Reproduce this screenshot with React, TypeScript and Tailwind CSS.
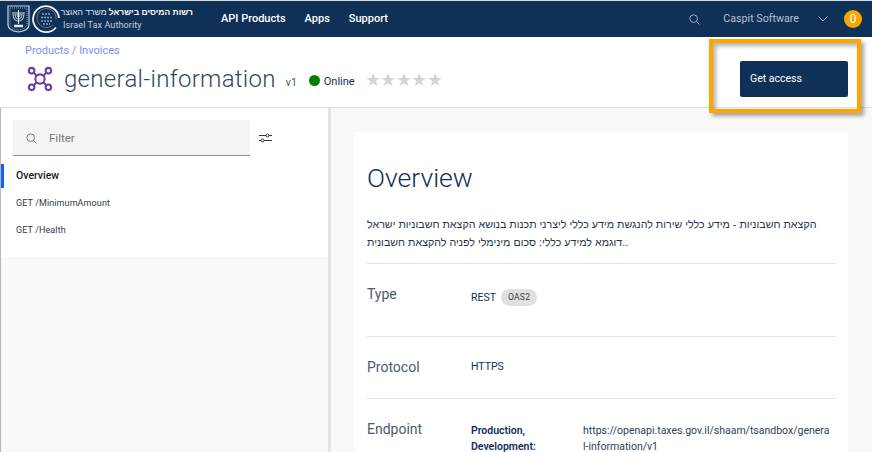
const font = { fontFamily: 'Roboto, "Liberation Sans", sans-serif' };

function Emblem() {
  return (
    <svg width="56" height="32" viewBox="0 0 56 32" fill="none" className="shrink-0">
      <path d="M1 3h21v19c0 4-4 6-10.500 7C5 28 1 26 1 22z" stroke="#c9d2dd" strokeWidth="1.200" />
      <path d="M3 5h17v16c0 3-3 5-8.500 6C6 26 3 24 3 21z" stroke="#8fa1b5" strokeWidth="1" strokeDasharray="1 1" />
      <path d="M11.500 7v14M6 9c0 7 2 9 5.500 9s5.500-2 5.500-9M8 9c0 5 1 7 3.500 7s3.500-2 3.500-7M10 9c0 3 0 5 1.500 5s1.500-2 1.500-5" stroke="#e4e9ef" strokeWidth="1" />
      <path d="M7 23h9" stroke="#e4e9ef" strokeWidth="2.500" />
      <path d="M49 24.500A13 13 0 1 1 52 15" stroke="#f0f3f6" strokeWidth="1.800" />
      <path d="M46 22a9.500 9.500 0 1 1 3-6" stroke="#5f7690" strokeWidth="1" />
      <path d="M35 11h9M34 14.500h11M34 18h11M36 21h7" stroke="#8fa1b5" strokeWidth="1.400" strokeDasharray="2 1" />
    </svg>
  );
}

function ApiIcon() {
  return (
    <svg width="26" height="26" viewBox="0 0 28 28" fill="none" stroke="#6b3fa0" strokeWidth="2.200" className="ml-[2px] shrink-0">
      <circle cx="5" cy="5" r="3" />
      <circle cx="23" cy="5" r="3" />
      <circle cx="5" cy="23" r="3" />
      <circle cx="23" cy="23" r="3" />
      <circle cx="14" cy="14" r="5" />
      <path d="M7.200 7.200 10.500 10.500M20.800 7.200 17.500 10.500M7.200 20.800 10.500 17.500M20.800 20.800 17.500 17.500" />
    </svg>
  );
}

function SearchIcon({ className }: { className: string }) {
  return (
    <svg width="11" height="11" viewBox="0 0 13 13" fill="none" stroke="currentColor" strokeWidth="1.100" className={className}>
      <circle cx="5.500" cy="5.500" r="4.500" />
      <path d="M9 9l3.500 3.500" />
    </svg>
  );
}

function TuneIcon() {
  return (
    <svg width="13" height="12" viewBox="0 0 13 12" fill="none" stroke="#333" strokeWidth="1" className="ml-[9px] shrink-0">
      <path d="M0 3.500h7M10 3.500h3M0 8.500h2M5 8.500h8" />
      <circle cx="8.500" cy="3.500" r="1.500" />
      <circle cx="3.500" cy="8.500" r="1.500" />
    </svg>
  );
}

function Row({ label, border, className, children }: { label: string; border?: boolean; className: string; children: React.ReactNode }) {
  return (
    <div className={`flex ${border ? "border-b border-[#e0e4e8]" : ""} ${className}`}>
      <div className="w-[104px] shrink-0 text-[14px] leading-[20px] text-[#4a5a6c]">{label}</div>
      {children}
    </div>
  );
}

export default function App() {
  return (
    <div className="relative h-[452px] w-[872px] overflow-hidden border-t border-[#d8d8d8] bg-[#f9f9f9] text-[#0f3158]" style={font}>
      <nav className="flex h-[36px] items-center bg-[#0f3158] text-white">
        <div className="ml-[7px] flex w-[214px] shrink-0 items-center">
          <Emblem />
          <div className="flex w-[130px] flex-col leading-none">
            <span dir="rtl" className="whitespace-nowrap text-[8.500px] text-[#dfe5ec]" style={{ fontFamily: '"Liberation Sans", sans-serif' }}>
              <b className="text-white">רשות המיסים בישראל</b> משרד האוצר
            </span>
            <span className="mt-[4px] whitespace-nowrap text-[9px] tracking-[0.1px] text-[#c5d0dc]">Israel Tax Authority</span>
          </div>
        </div>
        <div className="flex gap-[19px] text-[11px] font-medium">
          <span>API Products</span>
          <span>Apps</span>
          <span>Support</span>
        </div>
        <SearchIcon className="ml-auto text-[#9fb0c3]" />
        <span className="ml-[23px] whitespace-nowrap text-[10.700px] text-[#b4c1cf]">Caspit Software</span>
        <svg width="10" height="6" viewBox="0 0 10 6" fill="none" stroke="#9fb0c3" className="ml-[19px]"><path d="M.5.500l4.500 4.500 4.500-4.500" /></svg>
        <span className="ml-[16px] mr-[10px] flex h-[18px] w-[18px] items-center justify-center rounded-full bg-[#ffa500] text-[12px] text-white">0</span>
      </nav>

      <header className="flex h-[71px] border-b border-[#e0e0e0] bg-white pl-[25px]">
        <div>
          <div className="pt-[7px] text-[11px] leading-[14px] text-[#7b8dfa]">Products / Invoices</div>
          <div className="mt-[5px] flex items-center">
            <ApiIcon />
            <span className="ml-[11px] text-[24px] font-light leading-[32px] tracking-[0.3px] text-[#33475e]">general-information</span>
            <span className="ml-[10px] mt-[8px] text-[10.500px] text-[#44566c]">v1</span>
            <span className="ml-[12px] mt-[3px] h-[11px] w-[11px] rounded-full bg-[#008000]" />
            <span className="ml-[4px] mt-[6px] text-[11px]">Online</span>
            <span className="ml-[10px] mt-[1px] text-[18px] leading-none tracking-[-0.500px] text-[#d4d4d4]">★★★★★</span>
          </div>
        </div>
        <button className="ml-auto mr-[24px] mt-[24px] h-[36px] w-[108px] rounded-[2px] bg-[#0f3158] pl-[10px] text-left text-[10.500px] text-white">Get access</button>
      </header>

      <div className="flex h-[344px]">
        <aside className="w-[328px] shrink-0 border-l border-[#b8b8b8]">
          <div className="h-[149px] bg-white">
            <div className="flex items-center pl-[12px] pt-[12px]">
              <div className="flex h-[36px] w-[237px] items-center border-b border-[#8d8d8d] bg-[#f4f4f4] pl-[13px] pt-[2px] text-[11.500px] text-[#77767c]">
                <SearchIcon className="mr-[12px] text-[#6f6f6f]" />
                Filter
              </div>
              <TuneIcon />
            </div>
            <div className="mt-[8px] flex h-[24px] items-center border-l-[3px] border-[#0f62fe] pl-[12px] text-[10.500px] font-medium text-[#16202c]">Overview</div>
            <div className="mt-[6px] pl-[15px] text-[9px] leading-[18px] tracking-[0.1px] text-[#2d3a48]">GET /MinimumAmount</div>
            <div className="mt-[9px] pl-[15px] text-[9px] leading-[18px] tracking-[0.1px] text-[#2d3a48]">GET /Health</div>
          </div>
        </aside>
        <div className="w-[3px] shrink-0 bg-[#e4e4e4]" />
        <main className="flex-1 pl-[23px] pt-[24px]">
          <section className="h-[400px] w-[494px] bg-white pl-[13px] pr-[12px]">
            <h1 className="pt-[29px] text-[26.500px] font-light leading-[34px]">Overview</h1>
            <div className="h-[69px] border-b border-[#e0e4e8] pt-[20px]">
              <p className="whitespace-nowrap text-[10.700px] leading-[18px] text-[#27374a]" style={{ fontFamily: '"Liberation Sans", sans-serif' }}>
                הקצאת חשבוניות - מידע כללי שירות להנגשת מידע כללי ליצרני תכנות בנושא הקצאת חשבוניות ישראל
                <br />
                דוגמא למידע כללי: סכום מינימלי לפניה להקצאת חשבונית..
              </p>
            </div>
            <Row label="Type" border className="h-[73px] pt-[20px]">
              <div className="flex h-[18px] items-center pt-[9px] text-[10.500px]">
                REST
                <span className="ml-[5px] rounded-full bg-[#e0e0e0] px-[7px] text-[8.500px] leading-[17px] tracking-[0.3px] text-[#3d3d3d]">OAS2</span>
              </div>
            </Row>
            <Row label="Protocol" border className="h-[62px] pt-[20px]">
              <div className="pt-[1px] text-[10.500px] leading-[18px]">HTTPS</div>
            </Row>
            <Row label="Endpoint" className="pt-[20px]">
              <div className="w-[112px] shrink-0 pt-[4px] text-[10.500px] font-semibold leading-[16px]">Production,<br />Development:</div>
              <div className="w-[248px] break-all pt-[4px] text-[10.500px] leading-[16px] text-[#2b3f57]">https://openapi.taxes.gov.il/shaam/tsandbox/general-information/v1</div>
            </Row>
          </section>
        </main>
      </div>

      <div className="absolute left-[709px] top-[38px] h-[74px] w-[152px] border-[4px] border-[#ffa500] shadow-[3px_3px_4px_rgba(0,0,0,0.35),inset_3px_3px_4px_rgba(0,0,0,0.3)]" />
    </div>
  );
}
